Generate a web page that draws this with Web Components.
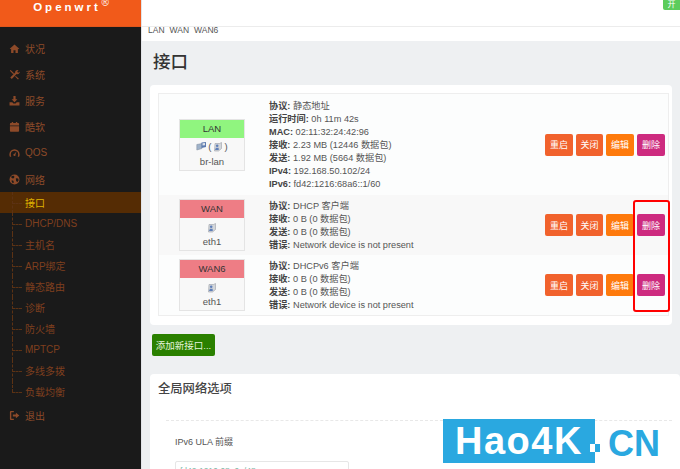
<!DOCTYPE html>
<html lang="zh"><head><meta charset="utf-8"><title>接口</title>
<style>
html,body{margin:0;padding:0;width:680px;height:469px;overflow:hidden;background:#eef0f2}
body{font-family:"Liberation Sans","Noto Sans CJK SC",sans-serif;color:#444}
</style></head><body>
<app-shell></app-shell>
<script>
const icons={
home:'<path d="M6 1.500 .8 6.200l.7.7.8-.7V11h2.600V7.800h2.200V11h2.600V6.200l.8.7.7-.7z"/>',
tools:'<path d="M1.800 1 5.500 4.700l-.9.9L.9 1.900zM10.500 1.200 9 2.700l.4.9.9.4 1.400-1.300c.2 1.500-.8 2.900-2.500 2.900l-.9-.1L3 11l-1.600-1.600 5.400-5.600c-.3-1.600.9-2.900 3.700-2.600zM7.400 7.600l3.400 3-1 .9-3.200-3.300z"/>',
down:'<path d="M4.800 1h2.400v3.600h2L6 8 2.800 4.600h2zM.6 8h3l1.200 1.200h2.400L8.400 8h3v3.400H.6z"/>',
cal:'<path d="M1 3.500c0-.8.5-1.300 1.200-1.300h.8V1h1.500v1.200h3V1H9v1.200h.8c.7 0 1.200.5 1.200 1.300V5H1zM1 5.800h10v4.700c0 .7-.5 1.100-1.200 1.100H2.200c-.7 0-1.200-.4-1.200-1.100z"/>',
gauge:'<path d="M6 2.500A5.600 5.600 0 0 0 .4 8.100c0 .9.2 1.700.6 2.400h1.500a4 4 0 0 1-.5-2.400 4 4 0 0 1 8 0c0 .9-.2 1.700-.5 2.400h1.500c.4-.7.6-1.500.6-2.400A5.600 5.600 0 0 0 6 2.500zM8.100 4.900 6.100 7.400a1.200 1.200 0 1 0 1 .7z"/>',
globe:'<circle cx="6" cy="6" r="5.400"/><path fill="#1a1a1a" d="M3 2.300 5.300 2l.7 1.300-1.300 1.500-1.200-.2L2.300 3.500zM7.500 4.500l2.500.4.600 2-1.600 2-1.300-1.600zM3 6.800l1.800.6.500 2-1.200.6-1.300-2z"/>',
out:'<path d="M1 2.300C1 1.500 1.600 1 2.300 1h3v1.400H2.500v7.200h2.800V11h-3C1.600 11 1 10.500 1 9.700z"/><path d="M7.500 3 11.300 6 7.500 9V7H4.200V5h3.300z"/>'
};
class NavItem extends HTMLElement{
 connectedCallback(){if(this.shadowRoot)return;
  const s=this.attachShadow({mode:'open'});
  s.innerHTML=`<style>:host{display:flex;align-items:center;height:26.200px;padding-left:8.500px;gap:5.500px;font-size:10px;color:#8d4a29}
  svg{width:11px;height:11px;fill:#8d4a29;flex:none}</style>
  <svg viewBox="0 0 12 12">${icons[this.getAttribute('icon')]||''}</svg><slot></slot>`;}
}
customElements.define('nav-item',NavItem);
class SubItem extends HTMLElement{
 connectedCallback(){if(this.shadowRoot)return;
  const s=this.attachShadow({mode:'open'});
  s.innerHTML=`<style>:host{display:flex;align-items:center;height:21px;padding-left:25px;font-size:10px;color:#7f3f1e;position:relative;white-space:nowrap}
  :host([active]){background:#552c04;color:#e0b400}
  i{position:absolute;left:12px;top:50%;width:10px;border-top:1px dashed #5c3214}
  b{position:absolute;left:12px;top:0;bottom:0;border-left:1px dashed #5c3214}
  :host([last]) b{bottom:50%}</style><b></b><i></i><slot></slot>`;}
}
customElements.define('sub-item',SubItem);
class SideBar extends HTMLElement{
 connectedCallback(){if(this.shadowRoot)return;
  const s=this.attachShadow({mode:'open'});
  s.innerHTML=`<style>:host{display:block;width:141px;height:469px;background:#1a1a1a;flex:none}
  header{height:26px;background:#f15a1a;border-bottom:1px solid #e0561c;color:#fff;font:bold 11.500px "Liberation Sans",sans-serif;letter-spacing:3px;display:flex;justify-content:center}
  header span{line-height:14px;height:14px;position:relative;margin-left:-7px}
  sup{font-size:10px;font-weight:normal;letter-spacing:0;position:absolute;top:-2px;right:-8px;line-height:10px}
  nav{padding-top:8px}</style>
  <header><span>Openwrt<sup>®</sup></span></header>
  <nav>
  <nav-item icon="home">状况</nav-item>
  <nav-item icon="tools">系统</nav-item>
  <nav-item icon="down">服务</nav-item>
  <nav-item icon="cal">酷软</nav-item>
  <nav-item icon="gauge">QOS</nav-item>
  <nav-item icon="globe">网络</nav-item>
  <sub-item active>接口</sub-item>
  <sub-item>DHCP/DNS</sub-item>
  <sub-item>主机名</sub-item>
  <sub-item>ARP绑定</sub-item>
  <sub-item>静态路由</sub-item>
  <sub-item>诊断</sub-item>
  <sub-item>防火墙</sub-item>
  <sub-item>MPTCP</sub-item>
  <sub-item>多线多拨</sub-item>
  <sub-item last>负载均衡</sub-item>
  <nav-item icon="out">退出</nav-item>
  </nav>`;}
}
customElements.define('side-bar',SideBar);
class IfBadge extends HTMLElement{
 connectedCallback(){if(this.shadowRoot)return;
  const s=this.attachShadow({mode:'open'});
  const lan=this.hasAttribute('up');
  const dev=`<svg viewBox="0 0 11 11" width="11" height="11"><path fill="#d3d6da" stroke="#9aa0a8" stroke-width=".6" d="M2 2.500h4.500l2 -1v6l-3 2.500H1.500z"/><path fill="#5f7fb8" d="M4.200 3.500a1.300 1.300 0 1 1 0 2.600 1.300 1.300 0 0 1 0-2.600zM2 9l1-2.200h2.600L5.800 9z"/></svg>`;
  const lanIco=`<svg viewBox="0 0 11 11" width="11" height="11"><path fill="#9fb2c9" stroke="#7e8a9a" stroke-width=".5" d="M.8 3.500 6 2.500v5L.8 9z"/><path fill="#5d7bb0" d="M5.500 1.500 10 1v5L5.500 7z"/><path fill="#dfe4ea" d="M6.500 2.300 9 2v2.200L6.500 4.500z"/></svg>`;
  s.innerHTML=`<style>:host{display:flex;flex-direction:column;width:66px;height:52px;box-sizing:border-box;border:1px solid #e4e4e4;background:#f8f8f8;font-size:9.500px;text-align:center;color:#555}
  .t{height:18px;line-height:18px;background:${lan?'#90f57f':'#ee7d85'};color:#333;font-size:9.500px;font-weight:500}
  .i{height:16px;display:flex;align-items:center;justify-content:center;gap:1px;color:#555;padding-top:1px}
  .d{line-height:14px;font-size:9.500px;color:#555}</style>
  <div class="t">${this.getAttribute('name')}</div>
  <div class="i">${lan?lanIco+'<span>(</span>'+dev+'<span>)</span>':dev}</div>
  <div class="d">${this.getAttribute('dev')}</div>`;}
}
customElements.define('if-badge',IfBadge);
class ActBtn extends HTMLElement{
 connectedCallback(){if(this.shadowRoot)return;
  const s=this.attachShadow({mode:'open'});
  s.innerHTML=`<style>:host{display:flex;align-items:center;justify-content:center;height:22px;border-radius:2px;color:#fff;font-size:9px;background:var(--c,#f15a22);width:var(--w,28px);box-sizing:border-box;opacity:.95}</style><slot></slot>`;}
}
customElements.define('act-btn',ActBtn);
class IfRow extends HTMLElement{
 connectedCallback(){if(this.shadowRoot)return;
  const s=this.attachShadow({mode:'open'});
  s.innerHTML=`<style>:host{display:grid;grid-template-columns:110px 276px 1fr;align-items:center;height:var(--h,60px);background:var(--bg,#fcfdfd)}
  .b{display:flex;justify-self:start;margin-left:20px}
  .x{font-size:9.200px;line-height:13px;color:#555;white-space:nowrap;padding-top:1px}
  .a{display:flex;gap:3px;padding-right:3px;justify-content:flex-end}</style>
  <div class="b"><slot name="badge"></slot></div>
  <div class="x"><slot></slot></div>
  <div class="a"><act-btn>重启</act-btn><act-btn style="--w:27px">关闭</act-btn><act-btn style="--c:#ff7300">编辑</act-btn><act-btn style="--c:#cb2079">删除</act-btn></div>`;}
}
customElements.define('if-row',IfRow);
class InfoLines extends HTMLElement{
 connectedCallback(){if(this.shadowRoot)return;
  const s=this.attachShadow({mode:'open'});
  const lines=JSON.parse(this.getAttribute('lines'));
  s.innerHTML=`<style>:host{display:block}b{font-weight:bold;color:#444}div{height:13px}</style>`+lines.map(([k,v])=>`<div><b>${k}:</b> ${v}</div>`).join('');}
}
customElements.define('info-lines',InfoLines);
class AppCard extends HTMLElement{
 connectedCallback(){if(this.shadowRoot)return;
  const s=this.attachShadow({mode:'open'});
  s.innerHTML=`<style>:host{display:block;background:#fff;border-radius:4px;box-sizing:border-box}</style><slot></slot>`;}
}
customElements.define('app-card',AppCard);
class AppShell extends HTMLElement{
 connectedCallback(){if(this.shadowRoot)return;
  const s=this.attachShadow({mode:'open'});
  s.innerHTML=`<style>:host{display:flex;width:680px;height:469px;position:relative;overflow:hidden;font-family:"Liberation Sans","Noto Sans CJK SC",sans-serif}
  main{flex:1;min-width:0;background:#eef0f2;border-left:1px solid #e2e4e8;height:469px;overflow:hidden;box-sizing:border-box}
  .top{height:26px;background:#fff;border-bottom:1px solid #ececec;position:relative}
  .sw{position:absolute;right:0;top:-1px;width:17px;height:11px;background:#5ccc5c;border-radius:0 0 0 2px;color:#fff;font-size:8px;line-height:11px;text-align:center}
  .tabs{height:14px;background:#fff;display:flex;gap:5px;padding-left:6px;font-size:8.500px;line-height:7px;color:#555;box-sizing:border-box;align-items:flex-start}
  h1{margin:0;font-size:17.500px;font-weight:500;color:#333;padding:11px 0 0 11px;height:33px;line-height:20px;box-sizing:content-box}
  .wrap{padding:0 8px}
  .c1{padding:8px 5px 9px 8px;width:522px}
  .tbl{border:1px solid #eeeeee;width:511px;box-sizing:border-box}
  .add{display:flex;margin:9px 0 0 2px;height:22px;width:63px;background:#2a8000;color:#e6f4dd;font-size:9.500px;align-items:center;justify-content:center;border-radius:2px}
  .c2{margin:18px 0 0;height:120px;width:530px;padding:7px 8px;box-sizing:border-box}
  h2{margin:0;font-size:12.300px;line-height:16px;font-weight:500;color:#444}
  .dash{border-top:1px dashed #e8e8e8;margin:23px 0 0 8px}
  .lab{font-size:9px;color:#555;padding:15px 0 0 17px;line-height:12px}
  .inp{margin:13px 0 0 17px;width:174px;height:24px;border:1px solid #e6e6e6;border-radius:2px;box-sizing:border-box;font-size:8.500px;color:#7fb8a8;padding:4px 0 0 4px}
  .mark{position:absolute;left:443px;top:419px;display:flex;align-items:center;height:44px}
  .mk1{background:#2aa8e0;color:#fff;width:152px;height:44px;font:bold 38px/44px "Liberation Sans",sans-serif;letter-spacing:1.500px;padding-left:12px;box-sizing:border-box;position:relative}
  .mk1 i{position:absolute;right:-5px;bottom:11px;width:10px;height:8px;background:linear-gradient(90deg,#fff 50%,#2aa8e0 50%)}
  .mk2{color:#2aa8e0;font:bold 36px/44px "Liberation Sans",sans-serif;margin:0 0 -6px 13px}
  .hl{position:absolute;left:633px;top:200px;width:37px;height:112px;box-sizing:border-box;border:2px solid #f00;border-radius:3px}</style>
  <side-bar></side-bar>
  <main>
   <div class="top"><div class="sw">开</div></div>
   <div class="tabs"><span>LAN</span><span>WAN</span><span>WAN6</span></div>
   <h1>接口</h1>
   <div class="wrap">
    <app-card class="c1"><div class="tbl">
     <if-row style="--h:101px">
      <if-badge slot="badge" up name="LAN" dev="br-lan"></if-badge>
      <info-lines lines='[["协议","静态地址"],["运行时间","0h 11m 42s"],["MAC","02:11:32:24:42:96"],["接收","2.23 MB (12446 数据包)"],["发送","1.92 MB (5664 数据包)"],["IPv4","192.168.50.102/24"],["IPv6","fd42:1216:68a6::1/60"]]'></info-lines>
     </if-row>
     <if-row style="--bg:#f8f8f8">
      <if-badge slot="badge" name="WAN" dev="eth1"></if-badge>
      <info-lines lines='[["协议","DHCP 客户端"],["接收","0 B (0 数据包)"],["发送","0 B (0 数据包)"],["错误","Network device is not present"]]'></info-lines>
     </if-row>
     <if-row>
      <if-badge slot="badge" name="WAN6" dev="eth1"></if-badge>
      <info-lines lines='[["协议","DHCPv6 客户端"],["接收","0 B (0 数据包)"],["发送","0 B (0 数据包)"],["错误","Network device is not present"]]'></info-lines>
     </if-row>
    </div></app-card>
    <div class="add">添加新接口...</div>
    <app-card class="c2"><h2>全局网络选项</h2><div class="dash"></div><div class="lab">IPv6 ULA 前缀</div><div class="inp">fd42:1216:68a6::/48</div></app-card>
   </div>
  </main>
  <div class="hl"></div>
  <div class="mark"><div class="mk1">Hao4K<i></i></div><div class="mk2">CN</div></div>`;}
}
customElements.define('app-shell',AppShell);
</script>
</body></html>
